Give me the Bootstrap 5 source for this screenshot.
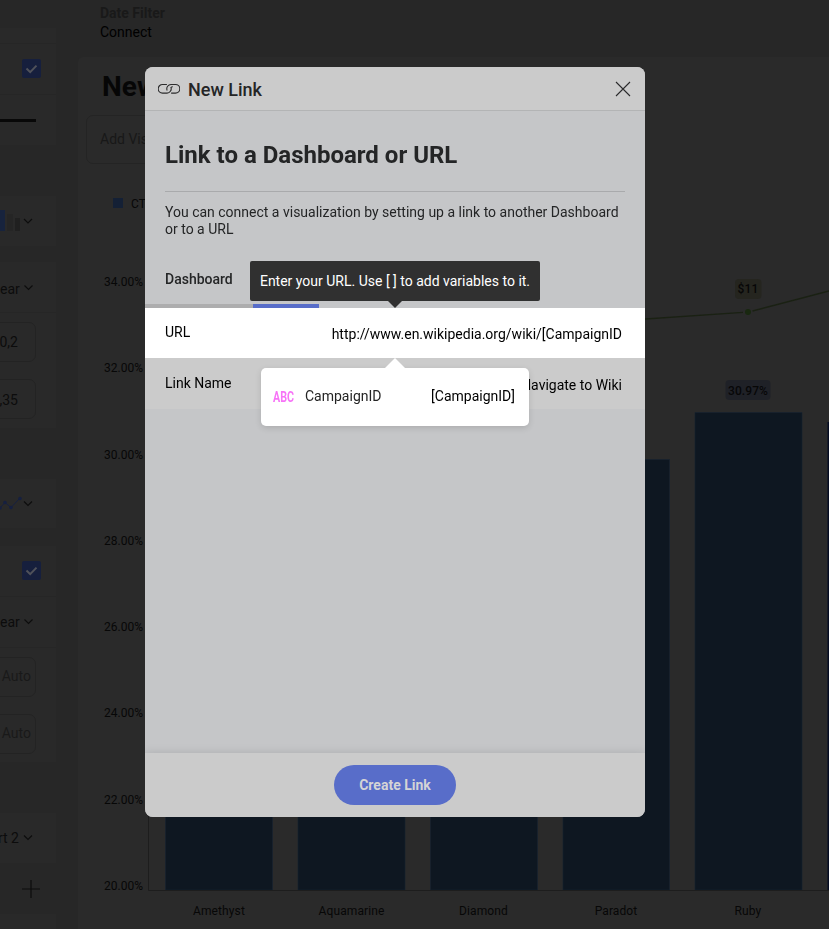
<!DOCTYPE html>
<html lang="en">
<head>
<meta charset="utf-8">
<meta name="viewport" content="width=device-width, initial-scale=1">
<title>New Link</title>
<link href="https://cdn.jsdelivr.net/npm/bootstrap@5.3.0/dist/css/bootstrap.min.css" rel="stylesheet">
<style>
body{font-family:Roboto,"Liberation Sans",sans-serif;font-size:14px;line-height:16.5px;color:#000;background:#272727;height:929px;overflow:hidden}
.app{height:929px}
.side{width:56px;flex:none;background:#272727;color:#0c0c0c}
.side-row{background:#292929;flex:none;overflow:hidden;padding-right:20px}
.side-row.line{border-bottom:1px solid #262626}
.gap-row{background:#272727;flex:none}
.field{width:80px;height:40px;border:1px solid #232323;border-radius:7px;flex:none;padding:2px 17px 0 0}
.field.hint{color:#191919;padding:0 4px 0 0}
.tick-box{width:19px;height:19px;border-radius:2px;background:#161f3d;margin:0 -5px 2px 0}
.tab-mark{height:3px;width:36px;background:#080808}
.main{margin-left:22px}
.filter-bar{height:57px;padding:5px 0 0 22px}
.filter-bar b{color:#191919;font-weight:700}
.filter-bar .value{margin-top:3px;line-height:14px}
.board{background:#2a2a2a;border-top-left-radius:5px;height:872px}
.board h1{font-size:28px;font-weight:700;line-height:32px;margin:0;padding:14px 0 0 24px;color:#060606}
.viz-title{margin:12px 0 0 8px;height:49px;width:550px;border:1px solid #242424;border-radius:7px;padding-left:13px;color:#181818;font-size:14px}
.plot{display:block;margin-top:1px}
.plot text{font-size:12px;fill:#070707;font-family:Roboto,sans-serif;letter-spacing:.1px}
.plot .ticks text{letter-spacing:0}
.modal.link-modal{overflow:hidden}
.link-modal .modal-dialog{width:500px;max-width:none;margin:67px 0 0 145px}
.link-modal .modal-content{height:750px;border:0;border-radius:8px;background:#c5c6c8;overflow:hidden;color:#000;box-shadow:none}
.link-modal .modal-header{height:44px;background:#cbcbcb;border-bottom:1px solid #b3b4b5;border-radius:0;padding:0 14px 0 13px}
.link-modal .modal-title{font-size:18px;font-weight:500;line-height:24px;color:#252526;padding-top:2px}
.link-modal .modal-body{padding:0;color:#242526}
.link-modal h2{font-size:24px;font-weight:700;line-height:28px;margin:0;color:#242526}
.intro{padding:30px 20px 0}
.intro hr{margin:22px 0 12px;border-top:1px solid #a9aaac;opacity:1}
.tabs{height:71px;padding:0}
.tabs span{font-weight:500;line-height:16px;padding-top:34px}
.tabs .other{width:108px;padding-left:20px;border-bottom:4px solid #adadae}
.tabs .active{width:66px;border-bottom:4px solid #586dc9}
.form-line{height:50px;padding:0 23px 0 20px;color:#000}
.form-line.url{background:#fff}
.form-line.name{height:51px;background:#cbcbcb;padding-top:1px}
.form-line label{padding-bottom:2px}
.form-line output{padding-top:2px}
.link-modal .modal-footer{height:64px;background:#cbcbcb;border:0;padding:0;border-radius:0;box-shadow:0 0 9px rgba(0,0,0,.13)}
.create{width:122px;height:40px;background:#586dc9;color:#d4d4d6;font-size:14px;font-weight:700;padding:0;line-height:16px;margin:0}
.tip{position:absolute;left:105px;top:194px;width:290px;height:40px;background:#303030;color:#fff;border-radius:2px}
.tip::after{content:"";position:absolute;left:138px;top:40px;border:7px solid transparent;border-top-color:#303030;border-bottom:0}
.suggest{position:absolute;left:116px;top:301px;width:268px;height:58px;background:#fff;border-radius:5px;padding:0 14px 2px 12px;box-shadow:0 2px 6px rgba(0,0,0,.13)}
.suggest::before{content:"";position:absolute;left:124px;top:-10px;border:10px solid transparent;border-bottom-color:#fff;border-top:0}
.suggest .var-name{color:#242424}
.abc{width:32px}
.abc text{font:700 14px Roboto,sans-serif;fill:#f774f7}
</style>
<script src="https://cdn.jsdelivr.net/npm/bootstrap@5.3.0/dist/js/bootstrap.bundle.min.js"></script>
</head>
<body>
<div class="app d-flex">
  <aside class="side d-flex flex-column">
    <div class="gap-row" style="height:28px"></div>
    <div class="side-row line" style="height:16px"></div>
    <div class="side-row line d-flex align-items-center justify-content-end" style="height:51px"><span class="tick-box d-flex"><svg width="19" height="19"><path d="M4.500 9.500l3.700 3.600 6.300-6.500" fill="none" stroke="#50525a" stroke-width="2"/></svg></span></div>
    <div class="side-row d-flex align-items-center p-0" style="height:50px"><span class="tab-mark"></span></div>
    <div class="gap-row" style="height:51px"></div>
    <div class="side-row d-flex align-items-center p-0" style="height:50px"><svg width="56" height="50"><path d="M0 14h5v21H0z" fill="#17233d"/><path d="M7 18h6v17H7z" fill="#252525"/><path d="M15 22h5v13h-5z" fill="#202020"/><path d="M24 23l4 4 4-4" fill="none" stroke="#0d0d0d" stroke-width="1.200"/></svg></div>
    <div class="gap-row" style="height:16px"></div>
    <div class="side-row line d-flex align-items-center justify-content-end pe-0 pt-1" style="height:51px"><span>ear</span><svg width="37" height="16"><path d="M4.500 4.500l4 4 4-4" fill="none" stroke="#0d0d0d" stroke-width="1.200"/></svg></div>
    <div class="side-row d-flex align-items-center justify-content-end" style="height:57px"><span class="field d-flex align-items-center justify-content-end">0,2</span></div>
    <div class="side-row d-flex align-items-center justify-content-end" style="height:58px"><span class="field d-flex align-items-center justify-content-end">,35</span></div>
    <div class="gap-row" style="height:51px"></div>
    <div class="side-row p-0" style="height:49px"><svg class="d-block" width="56" height="49"><path d="M0 29l5-5.500 6 5 9-9.500" fill="none" stroke="#162040"/><g fill="#162040"><circle cx="0" cy="29" r="1.800"/><circle cx="5" cy="23.500" r="1.800"/><circle cx="11" cy="28.500" r="1.800"/><circle cx="20" cy="19.500" r="1.800"/></g><path d="M24 22.500l4 4 4-4" fill="none" stroke="#0d0d0d" stroke-width="1.200"/></svg></div>
    <div class="gap-row" style="height:18px"></div>
    <div class="side-row line d-flex align-items-center justify-content-end" style="height:51px"><span class="tick-box d-flex"><svg width="19" height="19"><path d="M4.500 9.500l3.700 3.600 6.300-6.500" fill="none" stroke="#50525a" stroke-width="2"/></svg></span></div>
    <div class="side-row line d-flex align-items-center justify-content-end pe-0" style="height:51px"><span>ear</span><svg width="37" height="16"><path d="M4.500 5.500l4 4 4-4" fill="none" stroke="#0d0d0d" stroke-width="1.200"/></svg></div>
    <div class="side-row d-flex align-items-center justify-content-end" style="height:57px"><span class="field hint d-flex align-items-center justify-content-end">Auto</span></div>
    <div class="side-row d-flex align-items-center justify-content-end" style="height:57px"><span class="field hint d-flex align-items-center justify-content-end">Auto</span></div>
    <div class="gap-row" style="height:51px"></div>
    <div class="side-row d-flex align-items-center justify-content-end pe-0" style="height:50px"><span class="text-nowrap">rt 2</span><svg class="flex-shrink-0" width="37" height="16"><path d="M5 5.500l4 4 4-4" fill="none" stroke="#0d0d0d" stroke-width="1.200"/></svg></div>
    <div class="gap-row d-flex justify-content-end align-items-center" style="height:51px"><svg width="56" height="51"><path d="M22 26h18M31 17v18" stroke="#0d0d0d" stroke-width="1.200"/></svg></div>
    <div class="side-row flex-grow-1"></div>
  </aside>
  <main class="main flex-grow-1 overflow-hidden">
    <div class="filter-bar"><b class="d-block">Date Filter</b><div class="value">Connect</div></div>
    <section class="board">
      <h1>New</h1>
      <div class="viz-title d-flex align-items-center">Add Visualization</div>
      <svg class="plot" width="751" height="764" viewBox="78 165 751 764">
        <rect x="113" y="198" width="10" height="10" fill="#142035"/>
        <text x="131" y="207.500">CTR</text>
        <g fill="#0e1721">
          <path d="M165.500 480H272.500V890H165.500zM298 480H405V890H298zM430.500 470H537.500V890H430.500zM563 459.500H669.500V890H563zM695 412.500H802V890H695z" stroke="#162131" stroke-width=".6"/>
          <path d="M827.500 422H840V890H827.500z" fill="#050c22"/>
        </g>
        <path d="M148.500 282V890.500H829" fill="none" stroke="#1d1d1d"/>
        <g class="ticks" text-anchor="end">
          <text x="143" y="286">34.00%</text><text x="143" y="372.300">32.00%</text><text x="143" y="458.600">30.00%</text><text x="143" y="545">28.00%</text><text x="143" y="631.200">26.00%</text><text x="143" y="717.400">24.00%</text><text x="143" y="803.700">22.00%</text><text x="143" y="890">20.00%</text>
        </g>
        <g text-anchor="middle">
          <text x="219" y="915">Amethyst</text><text x="351.500" y="915">Aquamarine</text><text x="483.500" y="915">Diamond</text><text x="616" y="915">Paradot</text><text x="748" y="915">Ruby</text>
        </g>
        <path d="M616 321L743 312.300M752.500 311L829 291" fill="none" stroke="#1a2113" stroke-width="1.300"/>
        <circle cx="748" cy="312" r="3" fill="#192810"/>
        <rect x="735" y="279" width="26.500" height="20" rx="4" fill="#25251f"/>
        <rect x="725.500" y="380" width="45" height="20" rx="4" fill="#1f2127"/>
        <g text-anchor="middle" font-weight="500"><text x="748" y="293">$11</text><text x="748" y="394.500">30.97%</text></g>
      </svg>
    </section>
  </main>
</div>

<div class="modal link-modal d-block" tabindex="-1" role="dialog">
  <div class="modal-dialog">
    <div class="modal-content">
      <div class="modal-header d-flex">
        <svg class="me-2" width="22" height="14" viewBox="0.500 0 22 14" fill="none" stroke="#2b2b2c" stroke-width="1.100" stroke-linecap="round"><path d="M9 2.500H5A4.300 4.300 0 0 0 5 11.100H9.500A4.300 4.300 0 0 0 13.500 5.500L14.800 4.800M14 11.100H18A4.300 4.300 0 0 0 18 2.500H13.500A4.300 4.300 0 0 0 9.500 8.100"/></svg>
        <h5 class="modal-title me-auto">New Link</h5>
        <svg width="16" height="16" fill="none" stroke="#2b2b2c" stroke-width="1.100"><path d="M1 1l14 14M15 1L1 15"/></svg>
      </div>
      <div class="modal-body">
        <div class="intro"><h2>Link to a Dashboard or URL</h2><hr><p class="mb-0">You can connect a visualization by setting up a link to another Dashboard<br>or to a URL</p></div>
        <div class="tabs d-flex"><span class="other">Dashboard</span><span class="active"></span></div>
        <div class="form-line url d-flex align-items-center justify-content-between"><label>URL</label><output>http://www.en.wikipedia.org/wiki/[CampaignID</output></div>
        <div class="form-line name d-flex align-items-center justify-content-between"><label>Link Name</label><output>Navigate to Wiki</output></div>
      </div>
      <div class="modal-footer d-flex justify-content-center"><button class="btn create rounded-pill border-0">Create Link</button></div>
    </div>
    <div class="tip d-flex align-items-center justify-content-center">Enter your URL. Use [ ] to add variables to it.</div>
    <div class="suggest d-flex align-items-center"><svg class="abc" height="16"><text x="0" y="14" textLength="21" lengthAdjust="spacingAndGlyphs">ABC</text></svg><span class="var-name">CampaignID</span><span class="ms-auto">[CampaignID]</span></div>
  </div>
</div>
</body>
</html>
